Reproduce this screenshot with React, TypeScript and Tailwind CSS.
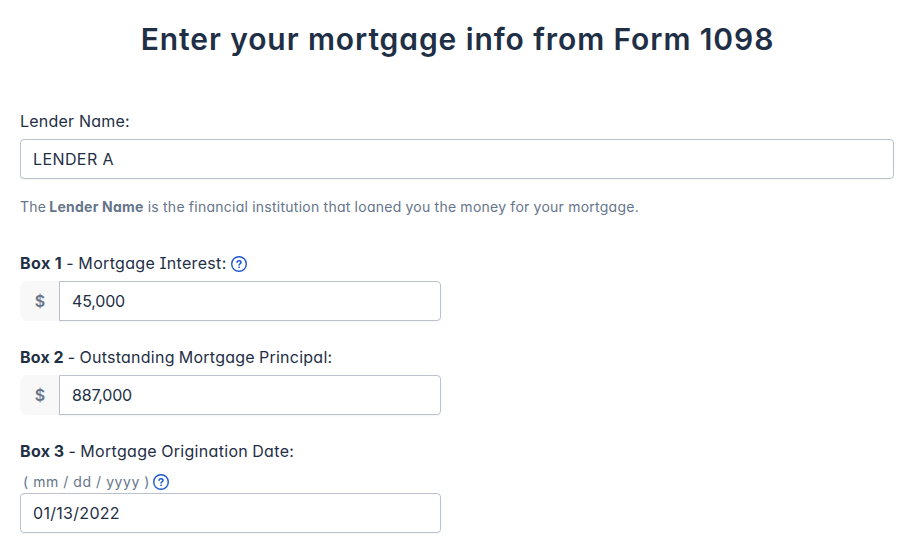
import React from 'react';

const inputClass =
  'block h-10 min-w-0 flex-1 border border-[#bac2ce] bg-white px-3 text-[16px] text-[#1f2f46] shadow-[0_1px_2px_rgba(31,47,70,0.05)] outline-none';

const HelpIcon = () => (
  <svg className="h-4 w-4 shrink-0" viewBox="0 0 16 16" fill="none" stroke="#1d57d0" strokeLinecap="round" strokeLinejoin="round">
    <circle cx="8" cy="8" r="7.3" strokeWidth={1.4} />
    <path strokeWidth={1.5} d="M6 6.3C6.2 5.3 7 4.8 8 4.8c1.2 0 2 .7 2 1.6 0 1.3-2 1.4-2 2.6" />
    <circle cx="8" cy="11.2" r="0.35" strokeWidth={1} />
  </svg>
);

interface MoneyFieldProps {
  id: string;
  value: string;
}

const MoneyField: React.FC<MoneyFieldProps> = ({ id, value }) => (
  <div className="mt-[6px] flex h-10 w-[421px]">
    <span className="flex w-[39px] items-center justify-center rounded-l-lg bg-[#f8f8f8] pl-px text-[16px] font-semibold text-[#66758a]">$</span>
    <input id={id} defaultValue={value} className={`${inputClass} rounded-r tracking-[-0.2px]`} />
  </div>
);

export default function App() {
  return (
    <main className="h-[540px] overflow-hidden bg-white pt-[19px] pr-[18px] pl-5 font-['Inter',sans-serif] text-[16px] leading-6 text-[#1f2f46] [font-feature-settings:'cv11','cv08']">
      <h1 className="text-center text-[30px] leading-10 font-semibold whitespace-nowrap">
        <span className="pl-px tracking-[0.91px]">Enter your mortgage info from Form 1098</span>
      </h1>

      <form className="mt-[50px]">
        <label htmlFor="lender" className="block h-6">
          <span className="tracking-[0.22px]">Lender Name:</span>
        </label>
        <div className="mt-[6px] flex">
          <input id="lender" defaultValue="LENDER A" className={`${inputClass} rounded tracking-[0.4px]`} />
        </div>
        <p className="mt-[18px] h-5 text-[14px] leading-5 whitespace-nowrap text-[#66758a]">
          <span className="tracking-[0.26px] [word-spacing:-0.2px]">The <b className="-ml-px font-bold">Lender Name</b> is the financial institution that loaned you the money for your mortgage.</span>
        </p>

        <div className="mt-[34px] flex h-6 items-center gap-1">
          <label htmlFor="interest">
            <span className="tracking-[0.32px] [word-spacing:-0.5px]"><b className="tracking-[0.5px]">Box 1</b> - Mortgage Interest:</span>
          </label>
          <span className="pt-0.5">
            <HelpIcon />
          </span>
        </div>
        <MoneyField id="interest" value="45,000" />

        <label htmlFor="principal" className="mt-[24px] block h-6">
          <span className="tracking-[0.25px] [word-spacing:-0.7px]"><b>Box 2</b> - Outstanding Mortgage Principal:</span>
        </label>
        <MoneyField id="principal" value="887,000" />

        <label htmlFor="origination" className="mt-[24px] block h-6">
          <span className="tracking-[0.32px] [word-spacing:-0.7px]"><b>Box 3</b> - Mortgage Origination Date:</span>
        </label>
        <div className="mt-[8px] flex h-[22px] items-center gap-[3px] pl-[3px] text-[14px] text-[#66758a]">
          <span className="tracking-[0.55px]">( mm / dd / yyyy )</span>
          <HelpIcon />
        </div>
        <div className="flex w-[421px]">
          <input id="origination" defaultValue="01/13/2022" className={`${inputClass} rounded tracking-[0.3px]`} />
        </div>
      </form>
    </main>
  );
}
